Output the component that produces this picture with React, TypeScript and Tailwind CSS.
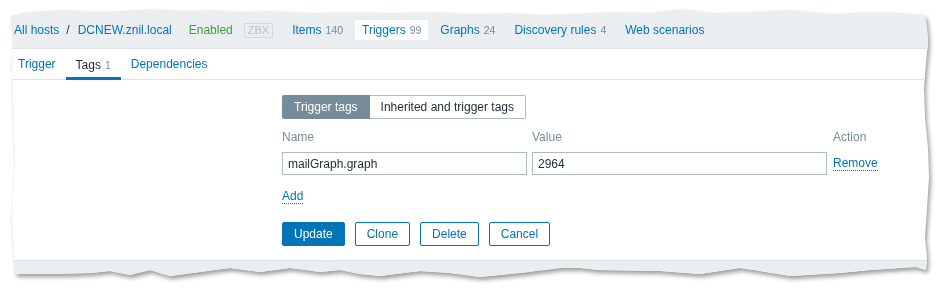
import React from 'react';

// Torn-paper outline of the screenshot, in the paper's own px
const paperEdge =
  '[clip-path:polygon(0px_8px,10px_5px,30px_3px,55px_2px,80px_4px,110px_3px,140px_1px,170px_3px,200px_2px,230px_4px,260px_3px,300px_5px,340px_4px,380px_5px,420px_4px,460px_6px,500px_5px,530px_7px,560px_6px,600px_4px,640px_5px,670px_1px,700px_5px,740px_4px,780px_2px,820px_6px,860px_4px,890px_5px,914px_7px,916px_20px,917px_35px,915px_55px,913px_80px,914px_110px,917px_140px,918px_170px,916px_200px,914px_230px,916px_250px,915px_262px,905px_259px,889px_260px,859px_262px,829px_265px,779px_268px,749px_263px,729px_260px,689px_266px,649px_263px,589px_262px,569px_260px,549px_260px,509px_265px,469px_269px,439px_265px,409px_263px,369px_268px,349px_266px,329px_262px,309px_264px,279px_260px,249px_264px,219px_260px,189px_264px,159px_268px,139px_262px,119px_267px,99px_263px,80px_265px,40px_266px,5px_266px,3px_262px,3px_240px,1px_215px,2px_190px,4px_160px,3px_120px,2px_90px,1px_60px,2px_30px)]';

const navItems = [
  { name: 'Items', count: '140' },
  { name: 'Triggers', count: '99', active: true },
  { name: 'Graphs', count: '24' },
  { name: 'Discovery rules', count: '4' },
  { name: 'Web scenarios' },
];

const Count: React.FC<{ value: string }> = ({ value }) => (
  <span className="ml-[4px] text-[10.5px] text-[#768d99]">{value}</span>
);

const App: React.FC = () => {
  return (
    <div className="w-[941px] h-[290px] bg-white pt-[8px] pl-[11px] font-['Liberation_Sans',Arial,sans-serif] text-[12px] leading-[14px] text-[#1f2c33]">
      <div className="w-[920px] h-[272px] [filter:drop-shadow(2px_3px_2px_rgba(0,0,0,0.38))]">
        <div className={`w-full h-full bg-white flex flex-col ${paperEdge}`}>
          {/* Host breadcrumbs and navigation */}
          <div className="h-[41px] shrink-0 bg-[#ebeef0] border-b border-[#dfe4e7] flex items-center pt-[4px] pl-[3px]">
            <span className="text-[#0275b8]">All hosts</span>
            <span className="ml-[7px] text-[#1f2c33]">/</span>
            <span className="ml-[8px] text-[#0275b8]">DCNEW.znil.local</span>
            <span className="ml-[17px] text-[#429e47]">Enabled</span>
            <span className="ml-[11px] h-[15px] px-[3px] border border-[#d4dbdf] text-[11px] leading-[13px] text-[#b8c4c9]">
              ZBX
            </span>
            <div className="ml-[12px] flex items-center gap-[5px]">
              {navItems.map((item) => (
                <span
                  key={item.name}
                  className={
                    'h-[20px] px-[7px] flex items-center text-[#0275b8] ' +
                    (item.active ? 'bg-white' : '')
                  }
                >
                  {item.name}
                  {item.count && <Count value={item.count} />}
                </span>
              ))}
            </div>
          </div>

          {/* Form tabs */}
          <div className="h-[31px] shrink-0 border-b border-[#dfe4e7] flex items-stretch pl-[7px]">
            <span className="pr-[10px] flex items-center text-[#0275b8]">Trigger</span>
            <span className="px-[10px] flex items-center border-b-[3px] border-[#0275b8] pt-[3px] mb-[-1px]">
              Tags
              <Count value="1" />
            </span>
            <span className="px-[10px] flex items-center text-[#0275b8]">Dependencies</span>
          </div>

          {/* Tags form */}
          <div className="h-[180px] shrink-0 pl-[271px] pt-[15px]">
            <div className="flex h-[24px]">
              <span className="px-[12px] flex items-center bg-[#768d99] text-white rounded-l-[2px]">
                Trigger tags
              </span>
              <span className="px-[11px] flex items-center border border-l-0 border-[#acbbc2] rounded-r-[2px]">
                Inherited and trigger tags
              </span>
            </div>

            <div className="mt-[11px] grid grid-cols-[245px_295px_auto] gap-x-[5px] items-center">
              <span className="text-[#768d99]">Name</span>
              <span className="text-[#768d99]">Value</span>
              <span className="ml-[1px] text-[#768d99]">Action</span>

              <div className="mt-[8px] h-[23px] border border-[#acbbc2] px-[5px] flex items-center">
                mailGraph.graph
              </div>
              <div className="mt-[8px] h-[23px] border border-[#acbbc2] px-[5px] flex items-center">
                2964
              </div>
              <div className="mt-[8px] ml-[1px]">
                <span className="inline-block text-[#0275b8] border-b border-dotted border-[#0275b8]">
                  Remove
                </span>
              </div>
            </div>

            <div className="mt-[14px]">
              <span className="inline-block text-[#0275b8] border-b border-dotted border-[#0275b8]">Add</span>
            </div>

            <div className="mt-[18px] flex gap-[10px]">
              <button className="h-[24px] px-[11px] rounded-[2px] bg-[#0275b8] border border-[#0275b8] text-white">
                Update
              </button>
              <button className="h-[24px] px-[11px] rounded-[2px] bg-white border border-[#0275b8] text-[#0275b8]">
                Clone
              </button>
              <button className="h-[24px] px-[11px] rounded-[2px] bg-white border border-[#0275b8] text-[#0275b8]">
                Delete
              </button>
              <button className="h-[24px] px-[11px] rounded-[2px] bg-white border border-[#0275b8] text-[#0275b8]">
                Cancel
              </button>
            </div>
          </div>

          {/* Page footer strip */}
          <div className="flex-1 bg-[#ebeef0] border-t border-[#dfe4e7]" />
        </div>
      </div>
    </div>
  );
};

export default App;
